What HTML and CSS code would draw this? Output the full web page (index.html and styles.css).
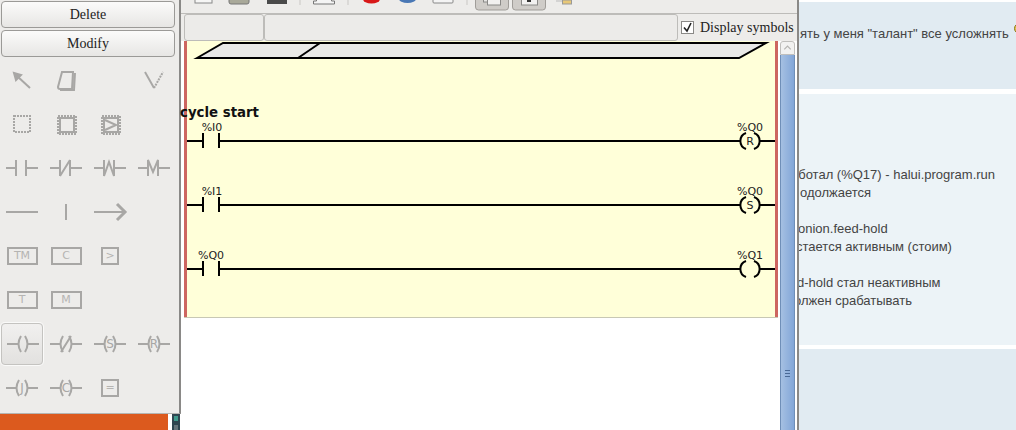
FILE: index.html
```html
<!DOCTYPE html>
<html lang="ru">

<head>
  <meta charset="UTF-8" />
  <title>Classic ladder</title>
  <link rel="stylesheet" href="styles.css">
</head>

<body>
  <div class="screen">
    <!-- left column: toolbox window + desktop panel -->
    <div class="leftcol">
      <aside class="toolbox">
        <div class="btnbox">
          <button class="btn">Delete</button>
          <button class="btn">Modify</button>
        </div>
        <div class="tools">
          <span class="tool"><svg viewBox="0 0 44 44"><path class="solid" d="M14 15l7 2-5 5z" /><path d="M17 18l13 12" /></svg></span>
          <span class="tool"><svg viewBox="0 0 44 44"><path d="M18 14h11l-1 17H16q-2 0-2-2zM31 15l-1 17H16" /></svg></span>
          <span class="tool"></span>
          <span class="tool"><svg viewBox="0 0 44 44"><path d="M13 14l9 16" /><path class="dot" d="M22 30l9-16" /></svg></span>

          <span class="tool"><svg viewBox="0 0 44 44"><rect class="dot" x="14" y="14" width="16" height="16" /></svg></span>
          <span class="tool"><svg viewBox="0 0 44 44"><rect class="dot" x="14" y="14" width="18" height="18" /><rect x="16" y="16" width="14" height="14" /></svg></span>
          <span class="tool"><svg viewBox="0 0 44 44"><rect class="dot" x="14" y="14" width="18" height="18" /><rect x="16" y="16" width="14" height="14" /><path d="M17 18l11 5-11 5" /></svg></span>
          <span class="tool"></span>

          <span class="tool"><svg viewBox="0 0 44 44"><path d="M6 22h10M16 14v16M26 14v16M26 22h12" /></svg></span>
          <span class="tool"><svg viewBox="0 0 44 44"><path d="M6 22h10M16 14v16M16 30l10-16M26 14v16M26 22h12" /></svg></span>
          <span class="tool"><svg viewBox="0 0 44 44"><path d="M6 22h10M16 14v16l5-14 5 14V14M26 22h12" /></svg></span>
          <span class="tool"><svg viewBox="0 0 44 44"><path d="M6 22h10M16 30V14l5 12 5-12v16M26 22h12" /></svg></span>

          <span class="tool"><svg viewBox="0 0 44 44"><path d="M6 22h32" /></svg></span>
          <span class="tool"><svg viewBox="0 0 44 44"><path d="M22 14v16" /></svg></span>
          <span class="tool"><svg viewBox="0 0 44 44"><path d="M6 22h31" /><path class="bold" d="M29 14l8 8-8 8" /></svg></span>
          <span class="tool"></span>

          <span class="tool"><span class="tbox">TM</span></span>
          <span class="tool"><span class="tbox">C</span></span>
          <span class="tool"><span class="tbox small">&gt;</span></span>
          <span class="tool"></span>

          <span class="tool"><span class="tbox">T</span></span>
          <span class="tool"><span class="tbox">M</span></span>
          <span class="tool"></span>
          <span class="tool"></span>

          <span class="tool on"><svg viewBox="0 0 42 42"><path d="M6 21h11M27 21h11M20 13q-5 8 0 16M24 13q5 8 0 16" /></svg></span>
          <span class="tool"><svg viewBox="0 0 44 44"><path d="M6 22h10M28 22h10M19 14q-5 8 0 16M25 14q5 8 0 16M17 30l10-16" /></svg></span>
          <span class="tool"><svg viewBox="0 0 44 44"><path d="M6 22h10M28 22h10M19 14q-5 8 0 16M25 14q5 8 0 16" /><text x="22" y="26">S</text></svg></span>
          <span class="tool"><svg viewBox="0 0 44 44"><path d="M6 22h10M28 22h10M19 14q-5 8 0 16M25 14q5 8 0 16" /><text x="22" y="26">R</text></svg></span>

          <span class="tool"><svg viewBox="0 0 44 44"><path d="M6 22h10M28 22h10M19 14q-5 8 0 16M25 14q5 8 0 16" /><text x="22" y="26">J</text></svg></span>
          <span class="tool"><svg viewBox="0 0 44 44"><path d="M6 22h10M28 22h10M19 14q-5 8 0 16M25 14q5 8 0 16" /><text x="22" y="26">C</text></svg></span>
          <span class="tool"><span class="tbox small">=</span></span>
          <span class="tool"></span>
        </div>
      </aside>
      <div class="panel">
        <div class="taskbar"></div>
        <div class="tray"><i></i><i class="second-tray"></i></div>
      </div>
    </div>

    <!-- section display window -->
    <section class="ladder">
      <div class="topbar">
        <svg class="topicons" viewBox="181 0 616 13">
          <rect x="195" y="-3" width="17" height="6" fill="#f6f6f5" stroke="#888" />
          <rect x="229" y="-3" width="20" height="7" rx="2" fill="#a9a99a" stroke="#777" />
          <rect x="267" y="-3" width="20" height="7" fill="#4a4a4a" />
          <path d="M300 0v5M348 0v5M467 0v5" stroke="#c9c7c4" />
          <path d="M316.500 -2h15v3h3v3h-21v-3h3z" fill="#f4f4f4" stroke="#777" />
          <ellipse cx="371.500" cy="-1" rx="8.500" ry="4.500" fill="#d81818" />
          <ellipse cx="407.500" cy="-1" rx="8.500" ry="4" fill="#4a78b5" />
          <rect x="433" y="-3" width="20" height="6" rx="1" fill="#f4f4f4" stroke="#888" />
          <rect x="475.500" y="-4" width="33" height="14" rx="3" fill="#cfccc8" stroke="#a09d99" />
          <rect x="483.500" y="-3" width="13" height="5" fill="#e6e5e3" stroke="#8a8987" />
          <rect x="487.500" y="-3" width="13" height="8" fill="#f2f1f0" stroke="#8a8987" />
          <rect x="512.500" y="-4" width="33" height="14" rx="3" fill="#cfccc8" stroke="#a09d99" />
          <rect x="521.500" y="-3" width="16" height="8" fill="#f2f1f0" stroke="#8a8987" />
          <rect x="527" y="-1" width="4" height="3" fill="#333" />
          <rect x="562.500" y="0" width="9" height="4" fill="#e8c878" stroke="#999" />
          <path d="M556 1h6" stroke="#bbb" />
        </svg>
      </div>
      <div class="secbar">
        <span class="field first"></span>
        <span class="field second"></span>
        <label class="symbols"><span class="check"><svg viewBox="0 0 11 11"><path d="M2 5.500l3 3.500 4-8" /></svg></span>Display symbols</label>
      </div>
      <div class="canvasrow">
        <div class="canvas">
          <svg class="rungs" viewBox="0 0 594 276">
            <path class="head" d="M13 17L39 2H582L555 17ZM114 17L136 2" />
            <g class="wire">
              <path d="M3 100H19M19 92V107M35 92V107M35 100H557M575 100H591" />
              <path d="M3 164H19M19 156V171M35 156V171M35 164H557M575 164H591" />
              <path d="M3 228H19M19 220V235M35 220V235M35 228H557M575 228H591" />
              <path d="M562 92A8.500 8.500 0 0 0 562 108M570 92A8.500 8.500 0 0 1 570 108" />
              <path d="M562 156A8.500 8.500 0 0 0 562 172M570 156A8.500 8.500 0 0 1 570 172" />
              <path d="M562 220A8.500 8.500 0 0 0 562 236M570 220A8.500 8.500 0 0 1 570 236" />
            </g>
            <text class="lbl" x="28" y="90">%I0</text>
            <text class="lbl" x="28" y="154">%I1</text>
            <text class="lbl" x="27" y="218">%Q0</text>
            <text class="lbl" x="566" y="90">%Q0</text>
            <text class="lbl" x="566" y="154">%Q0</text>
            <text class="lbl" x="566" y="218">%Q1</text>
            <text class="lbl" x="566" y="104">R</text>
            <text class="lbl" x="566" y="168">S</text>
          </svg>
          <b class="rungname">cycle start</b>
        </div>
        <div class="scroll">
          <span class="arrow"><svg viewBox="0 0 13 13"><path d="M3 8l3.500-3.500L10 8" /></svg></span>
          <span class="thumb"><em></em></span>
        </div>
      </div>
    </section>

    <!-- forum page behind the windows -->
    <main class="forum">
      <div class="post p1">
        <p class="l0">ять у меня "талант" все усложнять</p>
        <span class="smile"></span>
      </div>
      <div class="post p2">
        <p class="l1">аботал (%Q17) - halui.program.run</p>
        <p class="l2">одолжается</p>
        <p class="l3 br">onion.feed-hold</p>
        <p class="l4">стается активным (стоим)</p>
        <p class="l5 br">d-hold стал неактивным</p>
        <p class="l6">олжен срабатывать</p>
      </div>
      <div class="post p3"></div>
    </main>
  </div>
</body>

</html>
```

FILE: styles.css
```css
/* reset */
html,
body,
p {
  margin: 0;
  padding: 0;
}

body {
  width: 1016px;
  height: 430px;
  overflow: hidden;
  background-color: #fff;
}

.screen {
  display: flex;
  width: 1016px;
  height: 430px;
  overflow: hidden;
}

.leftcol {
  width: 181px;
  flex-shrink: 0;
  display: flex;
  flex-direction: column;
}

/* toolbox window */
.toolbox {
  height: 414px;
  flex-shrink: 0;
  box-sizing: border-box;
  background-color: #edecea;
  border-right: 2px solid #8a8987;
  border-bottom: 1px solid #b5b4b1;
}

.btnbox {
  display: flex;
  flex-direction: column;
  gap: 2px;
  padding: 1px 4px 0 1px;
}

.btn {
  height: 27px;
  padding: 0;
  border: 1px solid #9b9a97;
  border-radius: 4px;
  background: linear-gradient(#fbfbfa, #e7e6e4);
  font-family: "Liberation Serif", serif;
  font-size: 14px;
  color: #222;
}

.tools {
  display: grid;
  grid-template-columns: repeat(4, 44px);
  grid-auto-rows: 44px;
  padding-top: 1px;
}

.tool {
  display: flex;
  align-items: center;
  justify-content: center;
  box-sizing: border-box;
}

.tool svg {
  width: 44px;
  height: 44px;
  flex-shrink: 0;
  fill: none;
  stroke: #a8a7a5;
  stroke-width: 2;
}

.tool .dot {
  stroke-dasharray: 2 1;
}

.tool .solid {
  fill: #a8a7a5;
}

.tool .bold {
  stroke-width: 3;
}

.tool text {
  fill: #a8a7a5;
  stroke: none;
  font-family: "DejaVu Sans", sans-serif;
  font-size: 12px;
  text-anchor: middle;
}

.tool.on {
  margin: 1px;
  border: 1px solid #c4c3c0;
  border-radius: 4px;
  background: linear-gradient(#f1f0ef, #e2e1df);
  box-shadow: 0 0 0 1px #fafaf9;
}

.tool.on svg {
  width: 42px;
  height: 42px;
}

.tbox {
  display: block;
  width: 31px;
  height: 18px;
  box-sizing: border-box;
  border: 2px solid #a8a7a5;
  font-family: "DejaVu Sans", sans-serif;
  font-size: 11px;
  line-height: 13px;
  text-align: center;
  color: #b5b4b2;
}

.tbox.small {
  width: 18px;
}

/* desktop panel under the toolbox */
.panel {
  flex: 1;
  min-height: 0;
  display: flex;
  background-color: #fff;
}

.taskbar {
  width: 168px;
  background-color: #dc5a1e;
}

.tray {
  width: 8px;
  margin-left: 4px;
  overflow: hidden;
  background-color: #2f4650;
}

.tray i {
  display: block;
  width: 4px;
  height: 5px;
  margin: 2px;
  background-color: #3f9a8c;
}

.tray .second-tray {
  margin-top: 4px;
  background-color: #66757b;
}

/* section display */
.ladder {
  width: 616px;
  flex-shrink: 0;
  display: flex;
  flex-direction: column;
  background-color: #edecea;
  border-right: 2px solid #8a8987;
}

.topbar {
  height: 13px;
  border-bottom: 1px solid #bdbcb9;
}

.topicons {
  display: block;
  width: 616px;
  height: 13px;
}

.secbar {
  display: flex;
  align-items: center;
  height: 27px;
  padding-left: 3px;
}

.field {
  display: block;
  height: 27px;
  box-sizing: border-box;
  border: 1px solid #bdbcb9;
  border-radius: 3px;
  background-color: #ecebe9;
}

.first {
  width: 80px;
}

.second {
  width: 414px;
}

.symbols {
  display: flex;
  align-items: center;
  gap: 6px;
  margin-left: 3px;
  font-family: "Liberation Serif", serif;
  font-size: 14px;
  color: #222;
  white-space: nowrap;
}

.check {
  width: 11px;
  height: 11px;
  border: 1px solid #8a8987;
  background-color: #fff;
}

.check svg {
  display: block;
  fill: none;
  stroke: #222;
  stroke-width: 1.6;
}

.canvasrow {
  flex: 1;
  display: flex;
  min-height: 0;
  padding-left: 3px;
  background-color: #fff;
}

.canvas {
  position: relative;
  width: 594px;
  height: 276px;
  flex-shrink: 0;
  box-sizing: border-box;
  background-color: #ffffd9;
  border-left: 3px solid #cd6660;
  border-right: 3px solid #cd6660;
  box-shadow: 0 1px 0 #c8c8b4;
}

.rungs {
  position: absolute;
  left: -3px;
  top: 0;
  width: 594px;
  height: 276px;
}

.head {
  fill: #e9e9e7;
  stroke: #000;
  stroke-width: 2;
}

.wire path {
  fill: none;
  stroke: #000;
  stroke-width: 2;
}

.lbl {
  font-family: "DejaVu Sans", sans-serif;
  font-size: 11px;
  text-anchor: middle;
  fill: #222;
}

/* hangs out over the left red bar */
.rungname {
  position: absolute;
  left: -7px;
  top: 64px;
  font-family: "DejaVu Sans", sans-serif;
  font-size: 13.33px;
  line-height: 16px;
  color: #111;
}

.scroll {
  width: 15px;
  margin-left: 2px;
  display: flex;
  flex-direction: column;
}

.arrow {
  display: block;
  height: 14px;
  flex-shrink: 0;
  box-sizing: border-box;
  border: 1px solid #c0bfbc;
  border-radius: 3px 3px 0 0;
  background-color: #f2f2f1;
}

.arrow svg {
  display: block;
  width: 13px;
  height: 12px;
  fill: none;
  stroke: #b5b4b1;
  stroke-width: 1.3;
}

.thumb {
  flex: 1;
  display: flex;
  align-items: flex-end;
  justify-content: center;
  padding-bottom: 52px;
  border-left: 1px solid #6f8fb8;
  border-right: 1px solid #6f8fb8;
  background: linear-gradient(90deg, #a5c0e2, #82a6d8);
}

.thumb em {
  width: 5px;
  height: 8px;
  background: repeating-linear-gradient(#4a6a96 0, #4a6a96 1px, transparent 1px, transparent 3px);
}

/* forum behind */
.forum {
  flex: 1;
  display: flex;
  flex-direction: column;
  font-family: "Liberation Sans", sans-serif;
  font-size: 13px;
  line-height: 18px;
  color: #444;
  background-color: #fff;
  white-space: nowrap;
  overflow: hidden;
}

.post {
  position: relative;
}

.p1 {
  height: 87px;
  margin-top: 2px;
  margin-bottom: 5px;
  padding-top: 23px;
  box-sizing: border-box;
  background-color: #e1ebf2;
}

.p2 {
  height: 251px;
  margin-bottom: 4px;
  padding-top: 72px;
  box-sizing: border-box;
  background-color: #ecf3f7;
}

.p3 {
  flex: 1;
  background-color: #e1ebf2;
}

.br {
  margin-top: 18px;
}

/* lines start under the window, each is clipped at its own letter */
.l0 {
  margin-left: 1px;
}

.l1 {
  margin-left: -8px;
}

.l2 {
  margin-left: 1px;
}

.l3 {
  margin-left: -1px;
}

.l4 {
  margin-left: -3px;
}

.l5 {
  margin-left: -2px;
}

.l6 {
  margin-left: -5px;
}

.smile {
  position: absolute;
  left: 215px;
  top: 21px;
  width: 9px;
  height: 9px;
  border-radius: 50%;
  background-color: #e6c84a;
  border: 1px solid #8a7420;
}
```
